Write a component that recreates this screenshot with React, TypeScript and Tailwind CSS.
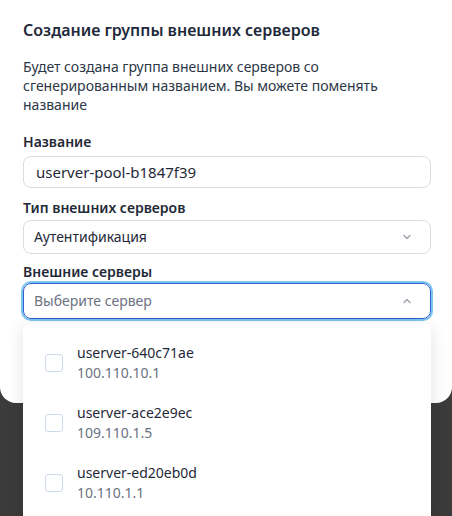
import { ChevronDown, ChevronUp } from "lucide-react"

const servers = [
  { name: "userver-640c71ae", ip: "100.110.10.1" },
  { name: "userver-ace2e9ec", ip: "109.110.1.5" },
  { name: "userver-ed20eb0d", ip: "10.110.1.1" },
]

const App = () => {
  return (
    <div className="h-[516px] w-[452px] overflow-hidden bg-[#3b3b3b] font-['Noto_Sans',sans-serif] text-[#1f2937]">
      <div className="h-[403px] rounded-b-2xl bg-white px-[23px] pt-[18px]">
        <h2 className="text-base font-semibold leading-6 text-[#1e293b]">
          Создание группы внешних серверов
        </h2>
        <p className="mt-[15px] text-sm leading-[19px] text-[#2d3748]">
          Будет создана группа внешних серверов со сгенерированным названием. Вы можете поменять
          название
        </p>

        <label className="mt-[18px] block text-sm font-semibold leading-5">Название</label>
        <div className="mt-1 flex h-8 w-[408px] items-center rounded-lg border border-[#d8dce3] px-[12px] text-[15px] text-[#1f2937]">
          userver-pool-b1847f39
        </div>

        <label className="mt-[10px] block text-sm font-semibold leading-5">Тип внешних серверов</label>
        <div className="mt-[2px] flex h-[34px] w-[408px] items-center justify-between rounded-lg border border-[#d8dce3] pl-[10px] pr-[17px] text-sm">
          <span>Аутентификация</span>
          <ChevronDown className="h-3 w-3 text-[#a0a6b1]" strokeWidth={3} />
        </div>

        <label className="mt-[8px] block text-sm font-semibold leading-5">Внешние серверы</label>
        <div className="relative mt-[1px] w-[408px]">
          <div className="flex h-9 items-center justify-between rounded-lg border border-[#2f5fd0] pl-[10px] pr-[17px] text-sm ring-2 ring-[#7cc4f0]">
            <span className="text-[#6b7280]">Выберите сервер</span>
            <ChevronUp className="h-3 w-3 text-[#a0a6b1]" strokeWidth={3} />
          </div>

          <ul className="absolute left-0 top-[40px] z-10 h-[200px] w-[408px] rounded-lg bg-white py-[10px] shadow-[0_4px_18px_rgba(0,0,0,0.12)]">
            {servers.map((s) => (
              <li key={s.name} className="flex h-[60px] items-center pl-[22px]">
                <span className="h-[18px] w-[18px] rounded-[3px] border border-[#cfdaee] bg-white" />
                <div className="ml-[14px] flex flex-col">
                  <span className="text-sm leading-5 text-[#1f2937]">{s.name}</span>
                  <span className="text-sm leading-5 text-[#6b7280]">{s.ip}</span>
                </div>
              </li>
            ))}
          </ul>
        </div>
      </div>
    </div>
  )
}

export default App
